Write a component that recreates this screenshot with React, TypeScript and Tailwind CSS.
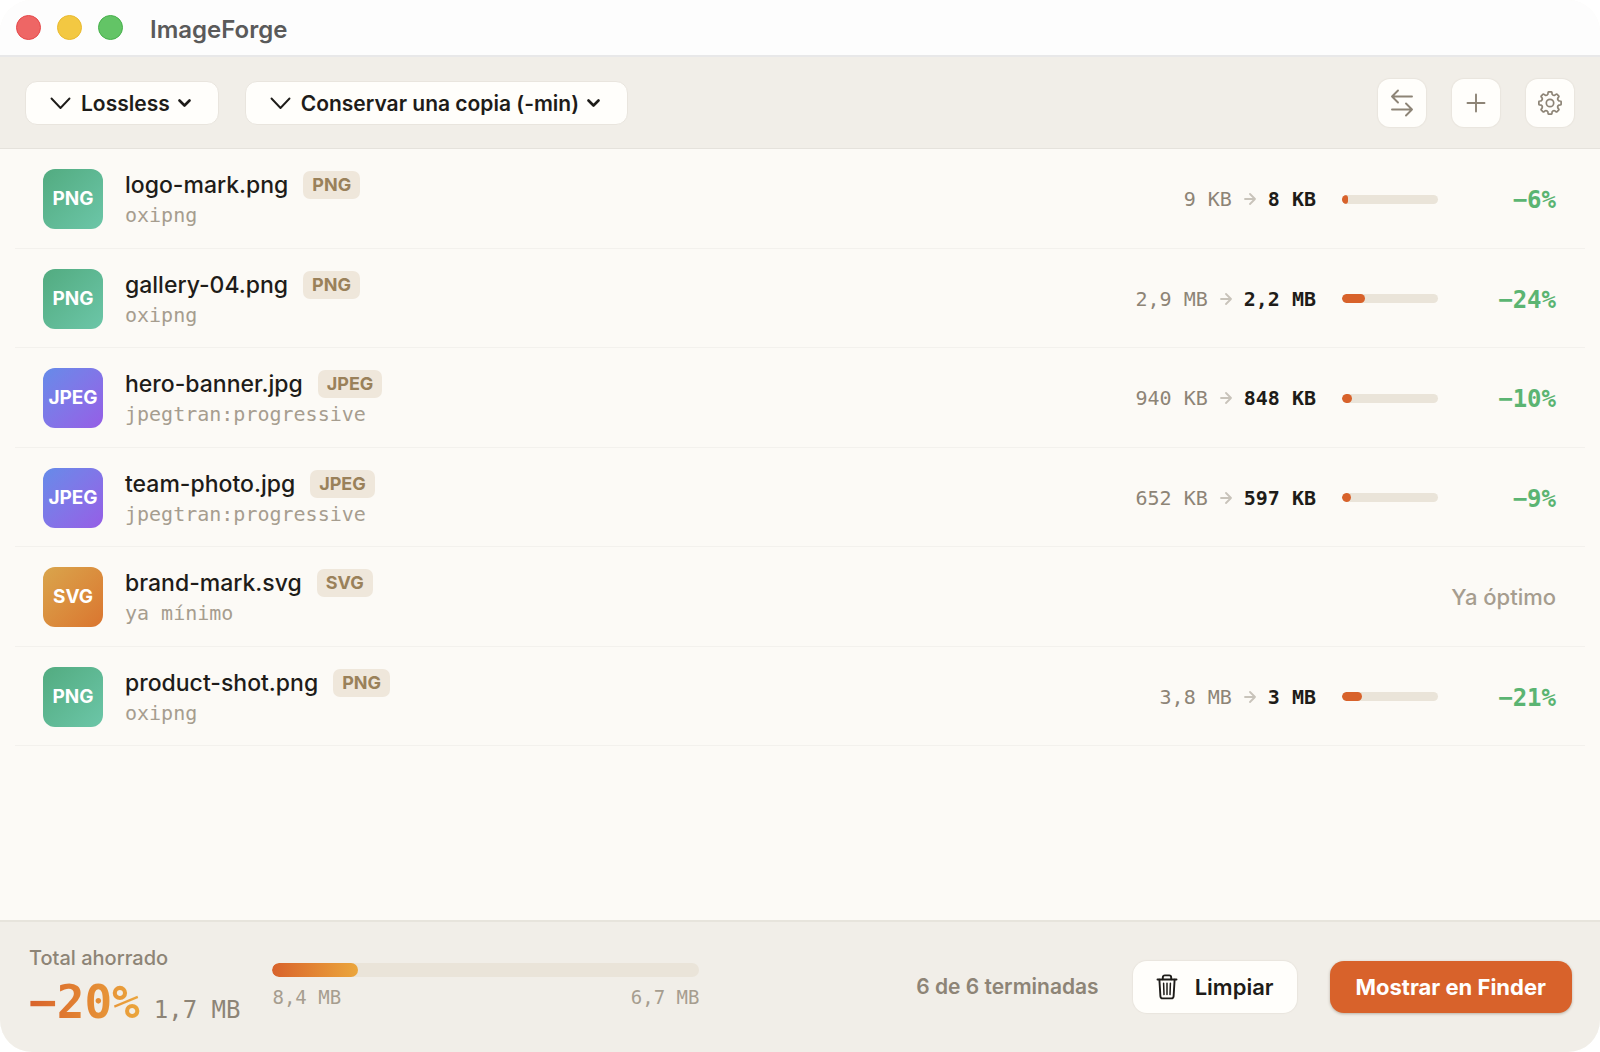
import { useState } from 'react';
import clsx from 'clsx';

type FileKind = 'PNG' | 'JPEG' | 'SVG';

type ImageFile = {
    name: string;
    kind: FileKind;
    tool: string;
    before?: string;
    after?: string;
    saved?: number;
};

const files: ImageFile[] = [
    { name: 'logo-mark.png', kind: 'PNG', tool: 'oxipng', before: '9 KB', after: '8 KB', saved: 6 },
    { name: 'gallery-04.png', kind: 'PNG', tool: 'oxipng', before: '2,9 MB', after: '2,2 MB', saved: 24 },
    { name: 'hero-banner.jpg', kind: 'JPEG', tool: 'jpegtran:progressive', before: '940 KB', after: '848 KB', saved: 10 },
    { name: 'team-photo.jpg', kind: 'JPEG', tool: 'jpegtran:progressive', before: '652 KB', after: '597 KB', saved: 9 },
    { name: 'brand-mark.svg', kind: 'SVG', tool: 'ya mínimo' },
    { name: 'product-shot.png', kind: 'PNG', tool: 'oxipng', before: '3,8 MB', after: '3 MB', saved: 21 },
];

const tileColors: Record<FileKind, string> = {
    PNG: 'from-[#52ab80] to-[#6cc6a8]',
    JPEG: 'from-[#648be9] to-[#955de6]',
    SVG: 'from-[#d9a54c] to-[#da752f]',
};

const mono = "font-['DejaVu_Sans_Mono',monospace]";

// eight-tooth cog centred on 12,12
const gearPath = () => {
    const at = (deg: number, r: number) => {
        const a = (deg * Math.PI) / 180;
        return `${(12 + r * Math.sin(a)).toFixed(2)} ${(12 - r * Math.cos(a)).toFixed(2)}`;
    };
    let d = '';
    for (let i = 0; i < 8; i++) {
        const t = i * 45;
        d += `${i === 0 ? 'M' : 'L'}${at(t - 13, 9.2)} L${at(t - 11, 10.4)} Q${at(t - 10, 11.2)} ${at(t - 7, 11.2)} `;
        d += `L${at(t + 7, 11.2)} Q${at(t + 10, 11.2)} ${at(t + 11, 10.4)} L${at(t + 13, 9.2)} Q${at(t + 22.5, 7.8)} ${at(t + 32, 9.2)} `;
    }
    return d + 'Z';
};

function GearIcon() {
    return (
        <svg width="24" height="24" viewBox="0 0 24 24" fill="none" stroke="currentColor" strokeWidth="1.7" strokeLinejoin="round">
            <path d={gearPath()} />
            <circle cx="12" cy="12" r="3.7" />
        </svg>
    );
}

function SwapIcon() {
    return (
        <svg width="24" height="28" viewBox="0 0 24 28" fill="none" stroke="currentColor" strokeWidth="1.9" strokeLinecap="round" strokeLinejoin="round">
            <path d="M22 7.5H2M8 1.5l-6 6 6 6" />
            <path d="M2 20.5h20M16 14.5l6 6-6 6" />
        </svg>
    );
}

function PlusIcon() {
    return (
        <svg width="20" height="20" viewBox="0 0 20 20" fill="none" stroke="currentColor" strokeWidth="1.9" strokeLinecap="round">
            <path d="M10 1.5v17M1.5 10h17" />
        </svg>
    );
}

function TrashIcon() {
    return (
        <svg width="22" height="26" viewBox="0 0 22 26" fill="none" stroke="currentColor" strokeWidth="1.9" strokeLinecap="round" strokeLinejoin="round">
            <path d="M1.5 5.5h19" />
            <path d="M6.8 5.2V3.4A2 2 0 0 1 8.8 1.4h4.4a2 2 0 0 1 2 2v1.8" />
            <path d="M3.4 5.8l1 16.4a2.3 2.3 0 0 0 2.3 2.2h8.6a2.3 2.3 0 0 0 2.3-2.2l1-16.4" />
            <path strokeWidth="1.5" d="M7.6 9.2l.4 11.4M11 9.2v11.4M14.4 9.2L14 20.6" />
        </svg>
    );
}

function ArrowIcon() {
    return (
        <svg width="12" height="12" viewBox="0 0 12 12" fill="none" stroke="currentColor" strokeWidth="1.8" strokeLinecap="round" strokeLinejoin="round">
            <path d="M1 6h10M6 1l5 5-5 5" />
        </svg>
    );
}

function PickMenu({ label, options }: { label: string; options: string[] }) {
    const [value, setValue] = useState(options[0]);

    return (
        <div className="relative text-[#1e1c19]">
            <select
                aria-label={label}
                value={value}
                onChange={(e) => setValue(e.target.value)}
                className="block h-11 appearance-none [field-sizing:content] rounded-xl border border-[#e9e5de] bg-[#fffefb] pt-0.5 pl-[55px] pr-12 text-[21px] font-semibold"
            >
                {options.map((option) => (
                    <option key={option}>{option}</option>
                ))}
            </select>
            <svg className="pointer-events-none absolute left-[25px] top-4" width="21" height="13" viewBox="0 0 21 13" fill="none" stroke="currentColor" strokeWidth="1.9" strokeLinecap="round" strokeLinejoin="round">
                <path d="M1.5 1.5l9 9.5 9-9.5" />
            </svg>
            <svg className="pointer-events-none absolute right-[28px] top-[18px]" width="13" height="9" viewBox="0 0 13 9" fill="none" stroke="currentColor" strokeWidth="2.6" strokeLinecap="round" strokeLinejoin="round">
                <path d="M1.5 1.5l5 5 5-5" />
            </svg>
        </div>
    );
}

function ToolButton({ label, children }: { label: string; children: React.ReactNode }) {
    return (
        <button
            type="button"
            aria-label={label}
            className="flex size-12 items-center justify-center rounded-xl bg-[#fffefb] text-[#8d8476] shadow-[0_0_1px_1px_#e9e5de]"
        >
            {children}
        </button>
    );
}

function FileRow({ file }: { file: ImageFile }) {
    return (
        <li className="flex items-center border-b border-[#f3f1ed] pt-0.5 pr-[29px] pl-7">
            <div className={clsx('flex size-15 shrink-0 items-center justify-center rounded-xl bg-linear-to-br text-[19px] font-bold text-white', tileColors[file.kind])}>
                {file.kind}
            </div>
            <div className="ml-[22px] flex-1 pt-1">
                <div className="flex items-center gap-[15px]">
                    <span className="text-[23px] leading-7 font-medium text-[#1e1c19]">{file.name}</span>
                    <span className="rounded-[7px] bg-[#efe7db] px-[9px] text-[18px] leading-7 font-bold text-[#9a815a]">{file.kind}</span>
                </div>
                <p className={clsx(mono, 'text-[20px] leading-8 text-[#a69d8f]')}>{file.tool}</p>
            </div>
            {file.saved === undefined ? (
                <span className="text-[22px] font-medium text-[#a69d8f]">Ya óptimo</span>
            ) : (
                <>
                    <div className={clsx(mono, 'flex items-center gap-3 text-[20px]')}>
                        <span className="text-[#8d8476]">{file.before}</span>
                        <span className="text-[#c8c3ba]"><ArrowIcon /></span>
                        <span className="font-bold text-[#1e1c19]">{file.after}</span>
                    </div>
                    <div className="ml-[26px] h-[9px] w-24 overflow-hidden rounded-full bg-[#eae4d9]">
                        <div className="h-full rounded-full bg-[#d8622b]" style={{ width: `${file.saved}%` }} />
                    </div>
                    <span className={clsx(mono, 'w-[118px] pt-0.5 text-right text-[24px] font-bold text-[#5bb472]')}>−{file.saved}%</span>
                </>
            )}
        </li>
    );
}

export default function App() {
    return (
        <div className="flex min-h-screen flex-col overflow-hidden rounded-[32px] bg-[#fcfaf6] font-['Inter',sans-serif]">
            <header className="flex h-[57px] items-center gap-4 border-b-2 border-[#e8e8e9] bg-[#fdfdfd] px-4">
                <span className="size-[25px] rounded-full border border-[#e5484a] bg-[#ee6665]" />
                <span className="size-[25px] rounded-full border border-[#e9b92e] bg-[#f3c842]" />
                <span className="size-[25px] rounded-full border border-[#46b04b] bg-[#63c466]" />
                <h1 className="ml-[11px] pt-1 text-[24px] font-semibold text-[#5a5a5a]">ImageForge</h1>
            </header>

            <div className="flex h-[92px] items-center border-b border-[#e5e2dc] bg-[#f1eee8] pr-[26px] pl-[25px]">
                <div className="flex flex-1 gap-[26px]">
                    <PickMenu label="Modo de compresión" options={['Lossless', 'Lossy']} />
                    <PickMenu label="Destino" options={['Conservar una copia (-min)', 'Reemplazar original']} />
                </div>
                <div className="flex gap-[26px]">
                    <ToolButton label="Comparar"><SwapIcon /></ToolButton>
                    <ToolButton label="Añadir"><PlusIcon /></ToolButton>
                    <ToolButton label="Ajustes"><GearIcon /></ToolButton>
                </div>
            </div>

            <main className="flex-1 px-[15px]">
                <ul className="grid min-h-[597px] auto-rows-fr">
                    {files.map((file) => (
                        <FileRow key={file.name} file={file} />
                    ))}
                </ul>
            </main>

            <footer className="flex h-[132px] items-center border-t-2 border-[#e7e4dc] bg-[#f1eee8] pr-7 pl-[29px]">
                <div className="pt-0.5">
                    <p className="text-[20px] leading-7 font-medium text-[#8d8476]">Total ahorrado</p>
                    <div className={clsx(mono, 'flex items-baseline gap-[14px]')}>
                        <span className="bg-linear-to-r from-[#d8622b] to-[#eba63c] bg-clip-text text-[46px] leading-15 font-bold text-transparent">−20%</span>
                        <span className="text-[24px] text-[#8d8476]">1,7 MB</span>
                    </div>
                </div>
                <div className="ml-8 w-[427px] pt-0.5">
                    <div className="h-[14px] overflow-hidden rounded-full bg-[#eae4d9]">
                        <div className="h-full w-1/5 rounded-full bg-linear-to-r from-[#d8622b] to-[#eba63c]" />
                    </div>
                    <div className={clsx(mono, 'mt-1 flex justify-between text-[19px] leading-8 text-[#a69d8f]')}>
                        <span>8,4 MB</span>
                        <span>6,7 MB</span>
                    </div>
                </div>
                <span className="ml-auto text-[21px] font-semibold text-[#8d8476]">6 de 6 terminadas</span>
                <button type="button" className="ml-[34px] flex h-[52px] items-center gap-[17px] rounded-[14px] bg-[#fffefb] px-[23px] text-[22px] font-semibold text-[#1e1c19] shadow-[0_0_1px_1px_#e9e5de]">
                    <TrashIcon />
                    Limpiar
                </button>
                <button type="button" className="ml-[33px] h-[52px] rounded-[14px] bg-[#d8622b] px-[26px] text-[22px] font-bold text-white shadow-[0_1px_3px_#b9b0a4]">
                    Mostrar en Finder
                </button>
            </footer>
        </div>
    );
}
